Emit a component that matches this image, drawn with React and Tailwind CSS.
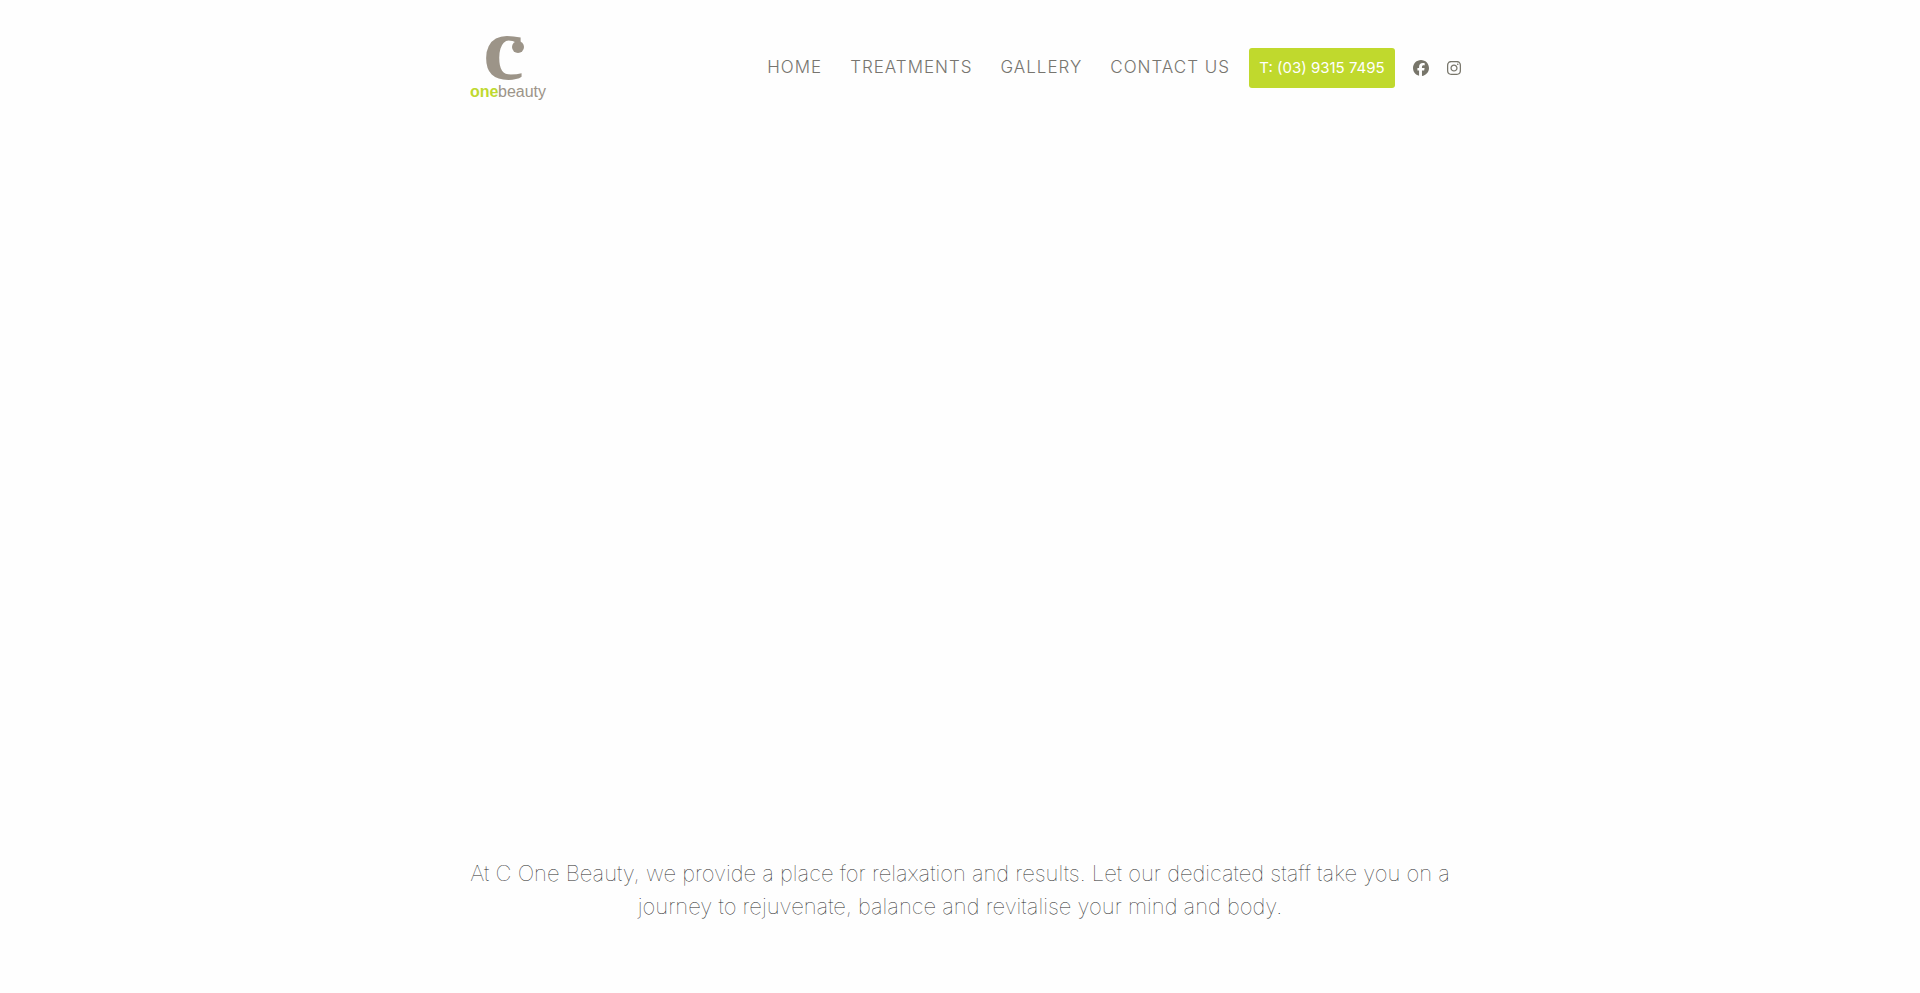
import { FaFacebook, FaInstagram } from 'react-icons/fa6';

const navLinks = [
    { label: 'Home', href: '#home' },
    { label: 'Treatments', href: '#treatments' },
    { label: 'Gallery', href: '#gallery' },
    { label: 'Contact Us', href: '#contact' },
];

function Logo() {
    return (
        <a href="#home" aria-label="C One Beauty" className="block">
            <svg width="78" height="72" viewBox="0 0 78 72" className="overflow-visible">
                <text
                    x="13"
                    y="47"
                    fontSize="92"
                    className="fill-[#9c9488] font-['Liberation_Serif',serif] font-bold"
                >
                    c
                </text>
                <circle cx="48" cy="15" r="6" className="fill-[#9c9488]" />
                <g fontSize="16" className="font-['Liberation_Sans',sans-serif]">
                    <text x="0" y="65" className="fill-[#bfd92f] font-bold">
                        one
                    </text>
                    <text x="28" y="65" className="fill-[#9c9488]">
                        beauty
                    </text>
                </g>
            </svg>
        </a>
    );
}

function Header() {
    return (
        <header className="flex items-center justify-between pt-8">
            <Logo />

            <div className="flex items-center">
                <nav className="flex items-center gap-7 pr-[19px]">
                    {navLinks.map((link) => (
                        <a
                            key={link.label}
                            href={link.href}
                            className="text-[17px] font-light tracking-[1px] text-[#77756f] uppercase"
                        >
                            {link.label}
                        </a>
                    ))}
                </nav>
                <a
                    href="tel:0393157495"
                    className="flex h-10 w-[146px] items-center justify-center rounded-[3px] bg-[#c0d92d] text-[15px] text-white"
                >
                    T: (03) 9315 7495
                </a>
                <a href="#facebook" aria-label="Facebook" className="ml-[18px] text-[#77756a]">
                    <FaFacebook size={16} />
                </a>
                <a href="#instagram" aria-label="Instagram" className="ml-[17px] text-[#77756a]">
                    <FaInstagram size={16} />
                </a>
            </div>
        </header>
    );
}

function App() {
    return (
        <div className="min-h-screen bg-[#fefefe] font-['Inter',sans-serif]">
            <div className="mx-auto max-w-[1020px] px-5 lg:pl-5 lg:pr-2">
                <Header />
            </div>

            {/* Banner area */}
            <section className="h-[753px]" aria-label="Banner" />

            <section className="mx-auto max-w-[1020px] px-5">
                <p className="text-center text-[22px] leading-[33px] font-thin text-[#1f1f1f]">
                    At C One Beauty, we provide a place for relaxation and results. Let our
                    dedicated staff take you on a journey to rejuvenate, balance and revitalise
                    your mind and body.
                </p>
            </section>
        </div>
    );
}

export default App;
